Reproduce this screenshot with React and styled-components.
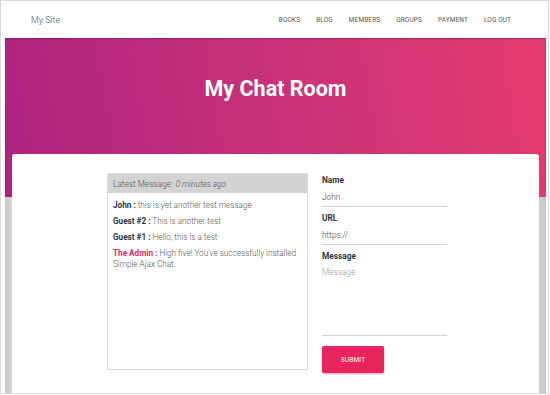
import React from "react";
import styled, { createGlobalStyle } from "styled-components";

const GlobalStyle = createGlobalStyle`
	html, body {
		margin: 0;
		padding: 0;
		background: #fff;
	}
	* {
		box-sizing: border-box;
	}
`;

const Frame = styled.div`
	width: 549px;
	height: 394px;
	border: 1px solid #d9d9d9;
	overflow: hidden;
	font-family: Roboto, "Liberation Sans", sans-serif;
	background: #fff;
`;

const NavBar = styled.header`
	height: 37px;
	display: flex;
	align-items: center;
	justify-content: space-between;
	padding: 0 37px 0 30px;
	.brand {
		font-size: 9px;
		font-weight: 300;
		color: #555;
	}
	nav {
		display: flex;
		gap: 16px;
	}
	a {
		font-size: 6.5px;
		color: #555;
		text-decoration: none;
		text-transform: uppercase;
		letter-spacing: 0.1px;
	}
`;

const Main = styled.main`
	margin: 0 2px 0 4px;
	height: 355px;
	background: linear-gradient(to right, #c6c6c6 0, #d6d6d6 7px, #d4d4d4 97%, #c9c9c9 100%);
`;

const Hero = styled.section`
	height: 159px;
	background: linear-gradient(80deg, #ad2380 0%, #c8317a 50%, #e53b6e 100%);
	box-shadow: inset 0 1px 2px rgba(0, 0, 0, 0.25);
	padding-top: 38px;
	h1 {
		margin: 0;
		text-align: center;
		color: #fff;
		font-size: 21.5px;
		font-weight: 700;
	}
`;

const Card = styled.div`
	margin: -43px 7px 0 7px;
	height: 239px;
	background: #fff;
	border-radius: 3px 3px 0 0;
	display: flex;
	justify-content: center;
	gap: 14px;
	padding: 19px 0 0 3px;
`;

const ChatBox = styled.div`
	width: 201px;
	height: 197px;
	border: 1px solid #dcdcdc;
`;

const ChatHeader = styled.div`
	height: 19px;
	background: #d3d3d3;
	display: flex;
	align-items: center;
	padding: 1px 5px 0;
	font-size: 8.3px;
	font-weight: 300;
	color: #555;
	em {
		margin-left: 3px;
	}
`;

const Messages = styled.div`
	padding: 7px 5px;
`;

const Message = styled.p`
	margin: 0 0 5px;
	font-size: 8.2px;
	font-weight: 300;
	line-height: 11px;
	color: #555;
	b {
		font-weight: 700;
		color: ${({ admin }) => (admin ? "#e8245f" : "#2f3440")};
	}
`;

const Form = styled.form`
	width: 125px;
	display: flex;
	flex-direction: column;
	align-items: flex-start;
	padding-top: 1px;
`;

const Label = styled.label`
	font-size: 8.3px;
	font-weight: 700;
	color: #2f3440;
	line-height: 12px;
	margin-top: ${({ first }) => (first ? "0" : "5px")};
`;

const Input = styled.input`
	width: 100%;
	height: 21px;
	border: none;
	border-bottom: 1px solid #d0d0d0;
	padding: 1px 0 0;
	font-family: inherit;
	font-size: 8.3px;
	font-weight: 300;
	color: #444;
	outline: none;
	background: transparent;
`;

const TextArea = styled.textarea`
	width: 100%;
	height: 72px;
	margin-top: 2px;
	border: none;
	border-bottom: 1px solid #d0d0d0;
	padding: 3px 0 0;
	font-family: inherit;
	font-size: 8.3px;
	font-weight: 300;
	line-height: 11px;
	color: #444;
	resize: none;
	outline: none;
	&::placeholder {
		color: #999;
	}
`;

const SubmitButton = styled.button`
	margin-top: 10px;
	width: 62px;
	height: 27px;
	border: none;
	border-radius: 2px;
	background: #e8245f;
	color: #fff;
	font-family: inherit;
	font-size: 6.5px;
	letter-spacing: 0.2px;
	box-shadow: 0 1px 2px rgba(232, 36, 95, 0.45);
`;

const links = ["Books", "Blog", "Members", "Groups", "Payment", "Log Out"];

const messages = [
	{ name: "John", text: "this is yet another test message" },
	{ name: "Guest #2", text: "This is another test" },
	{ name: "Guest #1", text: "Hello, this is a test" },
	{
		name: "The Admin",
		text: "High five! You've successfully installed Simple Ajax Chat.",
		admin: true,
	},
];

const App = () => {
	return (
		<>
			<GlobalStyle />
			<Frame>
				<NavBar>
					<span className="brand">My Site</span>
					<nav>
						{links.map((l) => (
							<a href="#" key={l}>
								{l}
							</a>
						))}
					</nav>
				</NavBar>
				<Main>
					<Hero>
						<h1>My Chat Room</h1>
					</Hero>
					<Card>
						<ChatBox>
							<ChatHeader>
								Latest Message: <em>0 minutes ago</em>
							</ChatHeader>
							<Messages>
								{messages.map((m) => (
									<Message key={m.name} admin={m.admin}>
										<b>{m.name} :</b> {m.text}
									</Message>
								))}
							</Messages>
						</ChatBox>
						<Form onSubmit={(e) => e.preventDefault()}>
							<Label first>Name</Label>
							<Input defaultValue="John" />
							<Label>URL</Label>
							<Input defaultValue="https://" />
							<Label>Message</Label>
							<TextArea placeholder="Message" />
							<SubmitButton type="submit">SUBMIT</SubmitButton>
						</Form>
					</Card>
				</Main>
			</Frame>
		</>
	);
};

export default App;
